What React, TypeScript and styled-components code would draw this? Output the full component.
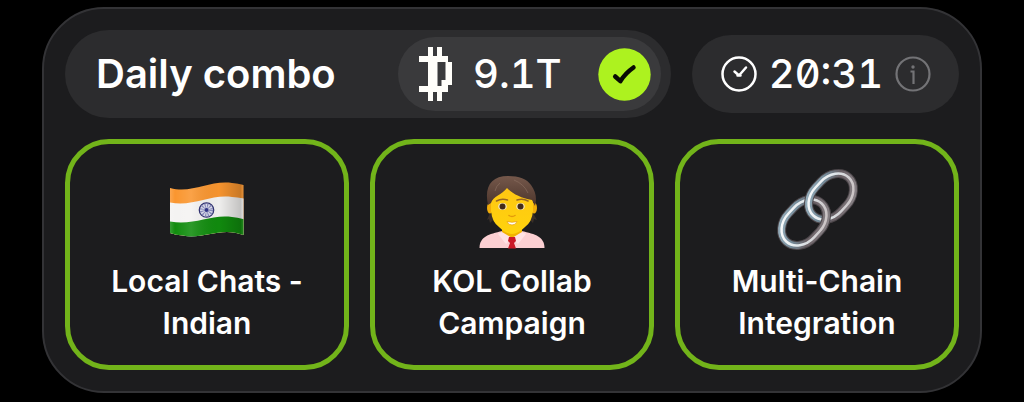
import React from "react";
import styled, { createGlobalStyle } from "styled-components";

const GlobalStyle = createGlobalStyle`
  * { box-sizing: border-box; }
  body {
    margin: 0;
    background: #000;
    color: #fff;
    font-family: Inter, "Liberation Sans", sans-serif;
  }
`;

const Page = styled.main`
  padding: 7px 42px 8px;
`;

const Panel = styled.section`
  display: flex;
  flex-direction: column;
  gap: 21px;
  padding: 21px;
  background: #1c1c1e;
  border: 2px solid #333336;
  border-radius: 62px;
`;

const Header = styled.header`
  display: flex;
  align-items: center;
  gap: 21px;
`;

const ComboBar = styled.div`
  flex: 1;
  display: flex;
  align-items: center;
  justify-content: space-between;
  padding: 7px 10px 7px 31px;
  border-radius: 44px;
  background: #2c2c2e;
`;

const Title = styled.h1`
  margin: 0;
  font-size: 40px;
  line-height: 48px;
  font-weight: 600;
  white-space: nowrap;
`;

const Reward = styled.div`
  display: flex;
  align-items: center;
  width: 263px;
  height: 74px;
  padding: 0 10px 0 21px;
  border-radius: 37px;
  background: #3a3a3c;
`;

const Figure = styled.span`
  font-size: 40px;
  line-height: 48px;
  font-weight: 500;
  font-feature-settings: "zero", "tnum";
  white-space: nowrap;
`;

const Amount = styled(Figure)`
  flex: 1;
  padding-left: 20px;
`;

const Timer = styled.div`
  display: flex;
  align-items: center;
  justify-content: space-between;
  width: 267px;
  height: 78px;
  padding: 0 28px 0 29px;
  border-radius: 39px;
  background: #2c2c2e;
`;

const InfoButton = styled.button`
  display: flex;
  padding: 0;
  border: 0;
  background: none;
  color: #737376;
  cursor: pointer;
`;

const Icon = styled.svg`
  display: block;
  flex: none;
`;

const Cards = styled.ul`
  display: grid;
  grid-template-columns: repeat(3, 1fr);
  gap: 21px;
  margin: 0;
  padding: 0;
  list-style: none;
`;

const Card = styled.li`
  display: flex;
  flex-direction: column;
  align-items: center;
  gap: 6px;
  padding: 22px 16px 21px;
  border: 5px solid #72b41a;
  border-radius: 44px;
`;

const CardTitle = styled.h2`
  max-width: 208px;
  margin: 0;
  font-size: 30px;
  line-height: 42px;
  font-weight: 600;
  text-align: center;
`;

const CoinIcon = () => (
  <Icon width="34" height="54" viewBox="0 0 34 54" fill="#fffefa" aria-hidden="true">
    <path
      fillRule="evenodd"
      d="M9 0h5v9h4V0h5v9h6v6h4v23h-4v7h-6v9h-5v-9h-4v9H9v-9H0v-6h9V15H0V9h9zM18.500 15v24h4v-6h4V15z"
    />
  </Icon>
);

const CheckIcon = () => (
  <Icon width="53" height="53" viewBox="0 0 53 53" role="img" aria-label="Completed">
    <circle cx="26.500" cy="26.500" r="26.200" fill="#adf21f" />
    <path d="M17.200 28.500l5.200 4.700Q27 25.500 35.500 19.500" fill="none" stroke="#090b04" strokeWidth="4.500" strokeLinecap="round" strokeLinejoin="round" />
  </Icon>
);

const ClockIcon = () => (
  <Icon width="36" height="36" viewBox="0 0 36 36" fill="none" stroke="#fff" strokeWidth="2.500" aria-hidden="true">
    <circle cx="18" cy="18" r="16.500" />
    <path d="M13.500 15.500l4.500 4 7-8M16.500 19.500h3" strokeLinecap="round" strokeLinejoin="round" />
  </Icon>
);

const InfoIcon = () => (
  <Icon width="36" height="36" viewBox="0 0 36 36" fill="none" stroke="currentColor" strokeWidth="2.200" aria-hidden="true">
    <circle cx="18" cy="18" r="16.500" />
    <path d="M15.500 15.500h3V28" />
    <circle cx="18" cy="11" r="1.700" fill="currentColor" stroke="none" />
  </Icon>
);

const FlagArt = () => (
  <Icon width="96" height="88" viewBox="0 0 96 88" aria-hidden="true">
    <defs>
      <linearGradient id="flagShade">
        <stop offset="0" stopColor="#fff" stopOpacity=".25" />
        <stop offset=".1" stopColor="#fff" stopOpacity="0" />
        <stop offset=".3" stopColor="#fff" stopOpacity=".12" />
        <stop offset=".65" stopColor="#000" stopOpacity=".02" />
        <stop offset=".92" stopColor="#000" stopOpacity=".2" />
        <stop offset="1" stopColor="#fff" stopOpacity=".1" />
      </linearGradient>
      <clipPath id="flagShape">
        <path d="M11 22C34 28 50 14 73 17Q79 17.500 84.500 19V69C62 60 43 74 24 69.500Q17 69 11 67z" />
      </clipPath>
    </defs>
    <g clipPath="url(#flagShape)">
      <path fill="#fa962f" d="M8 10h80v60H8z" />
      <path fill="#f4f3f2" d="M8 36C34 42 50 28 73 31Q79 31.500 88 33V90H8z" />
      <path fill="#118c0e" d="M8 55C34 61 50 48 73 51Q79 51.500 88 54V90H8z" />
      <path fill="url(#flagShade)" d="M8 10h80v70H8z" />
    </g>
    <circle cx="47.500" cy="44" r="7.200" fill="#d8d8e8" stroke="#30316f" strokeWidth="1.300" />
    <circle cx="47.500" cy="44" r="4.200" fill="none" stroke="#8588b8" strokeWidth="5" strokeDasharray="1 1.200" />
    <circle cx="47.500" cy="44" r="2" fill="#303487" />
  </Icon>
);

const PersonArt = () => (
  <Icon width="96" height="88" viewBox="0 0 96 88" aria-hidden="true">
    <defs>
      <linearGradient id="hair" x1="0" y1="0" x2="0" y2="1">
        <stop offset="0" stopColor="#75584b" />
        <stop offset="1" stopColor="#4c352b" />
      </linearGradient>
      <linearGradient id="skin" x1="0" y1="0" x2="0" y2="1">
        <stop offset="0" stopColor="#ffc514" />
        <stop offset="1" stopColor="#ffd30c" />
      </linearGradient>
    </defs>
    <path d="M26 47l-3 7 2-1 1 4 4-4zM69 47l4 7-3-1-1 4-4-4z" fill="#3a2f28" />
    <path d="M15.500 82c0-11 9-14 23-17h19c14 3 23 6 23 17z" fill="#fbcfd2" />
    <path d="M38 60h20v8L48 74l-10-6z" fill="#f2b300" />
    <path d="M38 66l10 6-6 6-8-10zM58 66l-10 6 6 6 8-10z" fill="#ffe2e4" />
    <path d="M45 71h6l1 4-2 2 2 5.500h-8l2-5.500-2-2z" fill="#cb1827" />
    <ellipse cx="26" cy="42" rx="3" ry="5.500" fill="#f1ad0a" />
    <ellipse cx="70" cy="42" rx="3" ry="5.500" fill="#f1ad0a" />
    <path d="M27 31Q27 16 48 16t21 15v14q-1 11-8 16-7 7-13 7t-13-7q-7-5-8-16z" fill="url(#skin)" />
    <path d="M24 39C20 21 27 10 44 10c11 0 19 3 23 9 5 7 6 13 4 21l-3-6C57 32 49 28 43 22 38 29 29 30 27 37z" fill="url(#hair)" />
    <path d="M36 17Q32 20 31 25M50 14q10 4 14 13" fill="none" stroke="#8d7163" strokeWidth="1" opacity=".6" />
    <path d="M32.500 35q5-3 11-1M53 34q6-2 11 1" fill="none" stroke="#9a6723" strokeWidth="1.500" strokeLinecap="round" />
    <ellipse cx="38.500" cy="40.500" rx="4.300" ry="3.400" fill="#f5e2b8" />
    <ellipse cx="56.500" cy="40.500" rx="4.300" ry="3.400" fill="#f5e2b8" />
    <circle cx="38.500" cy="40.500" r="3" fill="#432a18" />
    <circle cx="56.500" cy="40.500" r="3" fill="#432a18" />
    <path d="M45 49.500q3 2 6 0" fill="none" stroke="#e49a0b" strokeWidth="1.500" strokeLinecap="round" />
    <path d="M43 55.500q5 1.500 10 0-1 3.500-5 3.500t-5-3.500z" fill="#fff" stroke="#e8a311" strokeWidth=".8" />
  </Icon>
);

const linkLayers = [
  { stroke: "#4b4549", width: 9 },
  { stroke: "url(#steel)", width: 7 },
  { stroke: "url(#shine)", width: 2.5 },
];

const ChainLink = ({ x, y }: { x: number; y: number }) => (
  <g transform={`translate(${x} ${y}) rotate(-47)`} fill="none">
    {linkLayers.map((layer) => (
      <rect key={layer.width} x="-26" y="-17.500" width="52" height="35" rx="22" ry="17.500" stroke={layer.stroke} strokeWidth={layer.width} />
    ))}
  </g>
);

const ChainArt = () => (
  <Icon width="96" height="88" viewBox="0 0 96 88" aria-hidden="true">
    <defs>
      <linearGradient id="steel" x1="0" y1="0" x2="1" y2="1">
        <stop offset="0" stopColor="#9fb8c6" />
        <stop offset=".35" stopColor="#748a98" />
        <stop offset=".6" stopColor="#695f64" />
        <stop offset="1" stopColor="#8f8a8e" />
      </linearGradient>
      <linearGradient id="shine" x1="0" y1="0" x2="1" y2="1">
        <stop offset="0" stopColor="#fff" />
        <stop offset=".5" stopColor="#dfe6ea" />
        <stop offset="1" stopColor="#c3b7b8" />
      </linearGradient>
      <clipPath id="crossing">
        <path d="M48 43h20v22H48z" />
      </clipPath>
    </defs>
    <ChainLink x={35} y={56.5} />
    <ChainLink x={62} y={30.5} />
    <g clipPath="url(#crossing)">
      <ChainLink x={35} y={56.5} />
    </g>
  </Icon>
);

const combos = [
  { title: "Local Chats - Indian", Art: FlagArt },
  { title: "KOL Collab Campaign", Art: PersonArt },
  { title: "Multi-Chain Integration", Art: ChainArt },
];

export default function App() {
  return (
    <>
      <GlobalStyle />
      <Page>
        <Panel>
          <Header>
            <ComboBar>
              <Title>Daily combo</Title>
              <Reward>
                <CoinIcon />
                <Amount>9.1T</Amount>
                <CheckIcon />
              </Reward>
            </ComboBar>
            <Timer>
              <ClockIcon />
              <Figure>20:31</Figure>
              <InfoButton type="button" aria-label="About the daily combo">
                <InfoIcon />
              </InfoButton>
            </Timer>
          </Header>
          <Cards>
            {combos.map(({ title, Art }) => (
              <Card key={title}>
                <Art />
                <CardTitle>{title}</CardTitle>
              </Card>
            ))}
          </Cards>
        </Panel>
      </Page>
    </>
  );
}
